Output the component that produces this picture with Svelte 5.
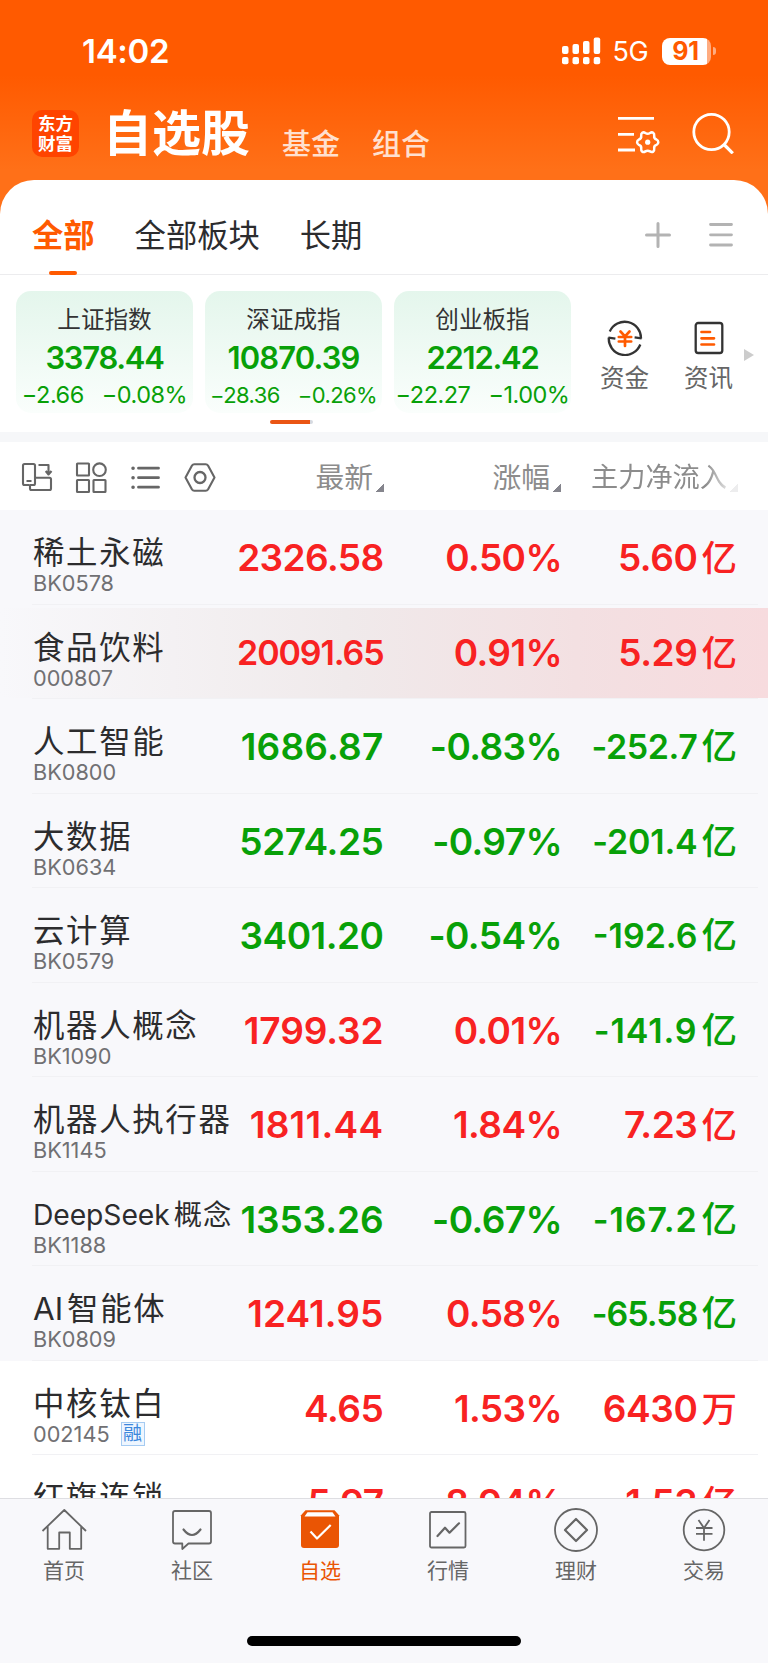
<script lang="ts">
    type Tone = 'up' | 'down';

    interface Row {
        latin?: string;
        name: string;
        code: string;
        price: string;
        priceGap: number;
        percent: string;
        flow: string;
        flowGap?: number;
        unit: string;
        tone: Tone;
        flowTone: Tone;
        stock?: boolean;
        flash?: boolean;
        margin?: boolean;
    }

    const indices = [
        { name: '上证指数', value: '3378.44', change: '−2.66', percent: '−0.08%', fit: '' },
        { name: '深证成指', value: '10870.39', change: '−28.36', percent: '−0.26%', fit: 'tight' },
        { name: '创业板指', value: '2212.42', change: '−22.27', percent: '−1.00%', fit: '' },
    ];

    const rows: Row[] = [
        { name: '稀土永磁', code: 'BK0578', price: '2326.58', priceGap: -0.6, percent: '0.50%', flow: '5.60', unit: '亿', tone: 'up', flowTone: 'up' },
        { name: '食品饮料', code: '000807', price: '20091.65', priceGap: -1.1, percent: '0.91%', flow: '5.29', unit: '亿', tone: 'up', flowTone: 'up', flash: true },
        { name: '人工智能', code: 'BK0800', price: '1686.87', priceGap: 0.2, percent: '-0.83%', flow: '-252.7', unit: '亿', tone: 'down', flowTone: 'down' },
        { name: '大数据', code: 'BK0634', price: '5274.25', priceGap: -0.4, percent: '-0.97%', flow: '-201.4', flowGap: -0.2, unit: '亿', tone: 'down', flowTone: 'down' },
        { name: '云计算', code: 'BK0579', price: '3401.20', priceGap: -0.5, percent: '-0.54%', flow: '-192.6', flowGap: 0, unit: '亿', tone: 'down', flowTone: 'down' },
        { name: '机器人概念', code: 'BK1090', price: '1799.32', priceGap: -0.1, percent: '0.01%', flow: '-141.9', flowGap: 0.9, unit: '亿', tone: 'up', flowTone: 'down' },
        { name: '机器人执行器', code: 'BK1145', price: '1811.44', priceGap: 0.3, percent: '1.84%', flow: '7.23', unit: '亿', tone: 'up', flowTone: 'up' },
        { latin: 'DeepSeek', name: '概念', code: 'BK1188', price: '1353.26', priceGap: -0.1, percent: '-0.67%', flow: '-167.2', flowGap: 0.9, unit: '亿', tone: 'down', flowTone: 'down' },
        { latin: 'AI', name: '智能体', code: 'BK0809', price: '1241.95', priceGap: 0.1, percent: '0.58%', flow: '-65.58', flowGap: -1, unit: '亿', tone: 'up', flowTone: 'down' },
        { name: '中核钛白', code: '002145', price: '4.65', priceGap: -0.4, percent: '1.53%', flow: '6430', unit: '万', tone: 'up', flowTone: 'up', stock: true, margin: true },
        { name: '红旗连锁', code: '002697', price: '5.97', priceGap: -0.5, percent: '8.94%', flow: '1.53', unit: '亿', tone: 'up', flowTone: 'up', stock: true },
    ];

    const tabs = ['首页', '社区', '自选', '行情', '理财', '交易'];
    let activeTab = $state('自选');
</script>

<div class="phone">
    <header class="hero">
        <div class="status">
            <span class="status__time">14:02</span>
            <svg width="39" height="28" viewBox="0 0 39 28" fill="#fff">
                <rect x="0" y="9" width="6.5" height="8" rx="2" />
                <rect x="10.5" y="7" width="6.5" height="10" rx="2" />
                <rect x="21" y="4" width="6.5" height="13" rx="2" />
                <rect x="31.7" y="0.5" width="6.5" height="16.5" rx="2" />
                <rect x="0" y="20" width="6.5" height="7.3" rx="2" />
                <rect x="10.5" y="20" width="6.5" height="7.3" rx="2" />
                <rect x="21" y="20" width="6.5" height="7.3" rx="2" />
                <rect x="31.7" y="20" width="6.5" height="7.3" rx="2" />
            </svg>
            <span class="status__net">5G</span>
            <div class="battery">91</div>
            <i class="battery__cap"></i>
        </div>

        <div class="title-bar">
            <div class="logo"><span>东方</span><span>财富</span></div>
            <h1>自选股</h1>
            <span class="title-bar__link">基金</span>
            <span class="title-bar__link">组合</span>
            <svg class="title-bar__filter" width="42" height="42" viewBox="0 0 42 42" fill="none" stroke="#fff" stroke-width="2.8">
                <path d="M0 3.3h36M0 19.3h16M0 35h17" />
                <path
                    d="M8.8 2.7Q6.1 3.6 6.5 6.300C6.900 9.200 4.700 10.700 2.300 9.200Q0 7.700-2.300 9.200C-4.700 10.700-6.900 9.200-6.500 6.300Q-6.100 3.600-8.800 2.700C-11.200 1.500-11.200-1.500-8.800-2.700Q-6.100-3.600-6.500-6.300C-6.900-9.200-4.700-10.700-2.300-9.200Q0-7.700 2.300-9.200C4.700-10.700 6.900-9.200 6.500-6.300Q6.100-3.600 8.800-2.700C11.200-1.500 11.200 1.500 8.800 2.700z"
                    transform="translate(29.7 27.2)"
                    stroke-width="2.5"
                />
                <circle cx="29.7" cy="27.2" r="2.6" fill="#fff" stroke="none" />
            </svg>
            <svg class="title-bar__search" width="42" height="42" viewBox="0 0 42 42" fill="none" stroke="#fff" stroke-width="2.8">
                <circle cx="19.5" cy="20" r="17.7" />
                <path d="M31.5 32l9.3 9.3" stroke-width="3.2" />
            </svg>
        </div>
    </header>

    <main>
        <nav class="groups">
            <button class="groups__item active">全部</button>
            <button class="groups__item">全部板块</button>
            <button class="groups__item">长期</button>
            <svg class="groups__add" width="26" height="26" viewBox="0 0 26 26" stroke="#b3b3b3" stroke-width="3" stroke-linecap="round">
                <path d="M1.5 13h23M13 1.5v23" />
            </svg>
            <svg class="groups__menu" width="24" height="26" viewBox="0 0 24 26" stroke="#b3b3b3" stroke-width="2.8" stroke-linecap="round">
                <path d="M1.5 2.5h21M1.5 12.8h21M1.5 23h21" />
            </svg>
        </nav>

        <section class="market">
            {#each indices as item}
                <div class="index {item.fit}">
                    <div class="index__name">{item.name}</div>
                    <div class="index__value">{item.value}</div>
                    <div class="index__change"><span>{item.change}</span><span>{item.percent}</span></div>
                </div>
            {/each}
            <div class="shortcut shortcut--fund">
                <svg width="36" height="36" viewBox="0 0 36 36" fill="none" stroke="#333" stroke-width="2.3">
                    <path d="M2.8 11.5A16.3 16.3 0 0 1 34 18.5M34.6 18.3l-7-.9M33.3 24.5A16.3 16.3 0 0 1 1.8 17.5M1.4 17.7l7 .9" />
                    <path d="M13.5 11.5l4.5 4.8 4.5-4.8M11.8 17h12.4M11.8 21.5h12.4M18 16v10" stroke="#ff5a00" stroke-width="2.7" stroke-linecap="round" />
                </svg>
                <span>资金</span>
            </div>
            <div class="shortcut">
                <svg width="30" height="36" viewBox="0 0 30 36" fill="none" stroke="#333" stroke-width="2.3">
                    <rect x="1.7" y="3" width="26.6" height="30" rx="2.5" />
                    <path d="M7.5 12h8.5M7.5 18.3h12.5M7.5 24.5h12.5" stroke="#ff5a00" stroke-width="2.7" stroke-linecap="round" />
                </svg>
                <span>资讯</span>
            </div>
            <i class="market__more"></i>
        </section>
        <div class="pager"><i></i></div>

        <div class="columns">
            <svg width="200" height="32" viewBox="0 0 200 32" fill="none" stroke="#666" stroke-width="2.1" stroke-linejoin="round">
                <path d="M9 23H4.5Q3 23 3 21.5v-18Q3 2 4.5 2h9Q15 2 15 3.5V15.7M6.5 19h5M18.5 3h10v9M25.7 9l2.8 3.5L31.5 9" />
                <path d="M15 15.7h14.5q1.500 0 1.500 1.500v9.300q0 1.500-1.500 1.500H11.500Q10 28 10 26.500V23h3.500q1.500 0 1.500-1.500z" />
                <rect x="57" y="1.5" width="12" height="12" rx=".5" />
                <circle cx="79.5" cy="7.7" r="6.3" />
                <rect x="57" y="18" width="12" height="12" rx=".5" />
                <rect x="73.5" y="18" width="12" height="12" rx=".5" />
                <path d="M118.5 6.2h20M118.5 15.7h20M118.5 25.2h20" stroke-width="2.8" stroke-linecap="round" />
                <path d="M113 6.2h.1M113 15.7h.1M113 25.2h.1" stroke-width="3.5" stroke-linecap="round" />
                <path d="M165.5 15.5l6.5-12q.8-1.3 2.3-1.3h11.4q1.5 0 2.3 1.3l6.5 12-6.5 12q-.8 1.3-2.3 1.3h-11.4q-1.5 0-2.3-1.3z" />
                <circle cx="180" cy="15.5" r="5.5" stroke-width="2.3" />
            </svg>
            <span class="columns__cell columns__cell--price">最新<i></i></span>
            <span class="columns__cell columns__cell--percent">涨幅<i></i></span>
            <span class="columns__cell columns__cell--flow">主力净流入<i></i></span>
        </div>

        <ul class="list">
            {#each rows as row}
                <li class="row" class:stock={row.stock} class:flash={row.flash}>
                    <div class="row__title">
                        <div class="row__name" class:narrow={row.latin === 'DeepSeek'}>
                            {#if row.latin}<span>{row.latin}</span>{/if}{row.name}
                        </div>
                        <div class="row__code">
                            {row.code}
                            {#if row.margin}<em>融</em>{/if}
                        </div>
                    </div>
                    <div class="row__price {row.tone}" class:long={row.price.length > 7} style:letter-spacing="{row.priceGap}px">{row.price}</div>
                    <div class="row__percent {row.tone}">{row.percent}</div>
                    <div class="row__flow {row.flowTone}" class:long={row.flow.length > 5} style:letter-spacing="{row.flowGap ?? -0.4}px">{row.flow}<b>{row.unit}</b></div>
                </li>
            {/each}
        </ul>
    </main>

    <footer>
        <nav class="tabbar">
            {#each tabs as tab}
                <button class="tabbar__item" class:active={tab === activeTab} onclick={() => (activeTab = tab)}>
                    <svg width="46" height="46" viewBox="0 0 46 46" fill="none" stroke="#666" stroke-width="1.8" stroke-linejoin="round">
                        {#if tab === '首页'}
                            <path d="M1.5 24L23.3 3l21.700 21M6.700 19.500v22.300h11.500V25.500h10.600v16.300h11.400V19.500" />
                        {:else if tab === '社区'}
                            <path d="M6 4h34q2 0 2 2v28.500q0 2-2 2H19.500L13.300 42v-5.500H6q-2 0-2-2V6q0-2 2-2z" />
                            <path d="M14.500 22.500q8.500 11 17 0" stroke-width="2.2" stroke-linecap="round" />
                        {:else if tab === '自选'}
                            <path d="M8.500 3.300h29L42 8.300V38q0 3-3 3H7q-3 0-3-3V8.300z" fill="#ea5504" stroke="none" />
                            <path d="M10.500 5.300h25l3 4.200h-31z" fill="#fff" stroke="none" />
                            <path d="M13.500 24.500l6.500 7 13.700-13.500" stroke="#fff" stroke-width="2.2" />
                        {:else if tab === '行情'}
                            <rect x="5" y="5" width="35.5" height="35.5" rx="1.5" />
                            <path d="M12.500 29l7.500-8.300 4.500 5 9.500-9.400" stroke-width="2.2" stroke-linecap="round" />
                        {:else if tab === '理财'}
                            <circle cx="23" cy="23" r="21" />
                            <path d="M23 12l11 11-11 11-11-11z" stroke-width="2.2" />
                        {:else}
                            <circle cx="23" cy="23" r="20.3" />
                            <path d="M17.500 13l5.500 8 5.500-8M15 21h16.500M15 26.800h16.500M23 20v13.800" />
                        {/if}
                    </svg>
                    <span>{tab}</span>
                </button>
            {/each}
        </nav>
        <div class="home-indicator"></div>
    </footer>
</div>

<style>
    :global(body) {
        margin: 0;
    }

    * {
        box-sizing: border-box;
    }

    .phone {
        display: flex;
        flex-direction: column;
        width: 768px;
        height: 1663px;
        overflow: hidden;
        background: linear-gradient(#ff5a00 0, #ff5a00 75px, #ff7018 170px, #ff7018 230px, #fff 230px);
        color: #2c2c2e;
        font-family: Inter, 'Noto Sans CJK SC', sans-serif;
    }

    button {
        padding: 0;
        border: none;
        background: none;
        color: inherit;
        font-family: inherit;
    }

    svg {
        flex: none;
    }

    .hero {
        flex: none;
        height: 179.5px;
        color: #fff;
    }

    .status {
        display: flex;
        align-items: center;
        height: 102px;
        padding-left: 82px;
    }

    .status__time {
        width: 479.5px;
        font-size: 33px;
        font-weight: 600;
        letter-spacing: -0.3px;
    }

    .status__net {
        width: 49px;
        padding: 1px 0 0 12px;
        font-size: 27px;
        letter-spacing: -0.4px;
    }

    .battery {
        width: 49px;
        height: 27px;
        margin-left: 12.5px;
        padding-right: 2px;
        border-radius: 8px;
        background: linear-gradient(90deg, #fff 45px, #ffac80 45px);
        color: #ff5a00;
        font-size: 25px;
        font-weight: 700;
        line-height: 27px;
        text-align: center;
        letter-spacing: -0.3px;
    }

    .battery__cap {
        width: 3px;
        height: 8px;
        margin-left: 2px;
        border-radius: 0 4px 4px 0;
        background: #ffac80;
    }

    .title-bar {
        display: flex;
        align-items: flex-start;
        height: 77px;
        padding-left: 32px;
    }

    .logo {
        display: flex;
        flex-direction: column;
        align-items: center;
        width: 47px;
        height: 47px;
        margin-top: 8px;
        padding-top: 4px;
        border-radius: 10px;
        background: #ff4400;
        font-size: 17.5px;
        font-weight: 700;
        line-height: 20px;
    }

    h1 {
        width: 147px;
        margin: 6px 0 0 24px;
        font-size: 49px;
        font-weight: 700;
        line-height: 52px;
        white-space: nowrap;
    }

    .title-bar__link {
        width: 58px;
        margin: 25px 0 0 32px;
        color: #ffe0cf;
        font-size: 29px;
        font-weight: 500;
        line-height: 36px;
        white-space: nowrap;
    }

    .title-bar__filter {
        margin: 13px 0 0 188px;
    }

    .title-bar__search {
        margin: 10px 0 0 32px;
    }

    main {
        flex: 1;
        min-height: 0;
        overflow: hidden;
        border-radius: 34px 34px 0 0;
        background: #fff;
    }

    .groups {
        display: flex;
        align-items: center;
        height: 95.5px;
        padding: 16px 0 0 32px;
        border-bottom: 1px solid #ececee;
    }

    .groups__item {
        position: relative;
        height: 79px;
        margin-right: 40px;
        padding-bottom: 3px;
        font-size: 31.3px;
        white-space: nowrap;
    }

    .groups__item.active {
        color: #ff5a00;
        font-weight: 700;
    }

    .groups__item.active::after {
        position: absolute;
        bottom: -1px;
        left: 17px;
        width: 28px;
        height: 4px;
        border-radius: 2px;
        background: #ff5a00;
        content: '';
    }

    .groups__add {
        margin-left: auto;
    }

    .groups__menu {
        margin: 0 35px 0 38px;
    }

    .market {
        display: flex;
        gap: 12px;
        height: 138px;
        padding: 16px 0 0 16px;
    }

    .index {
        width: 177px;
        height: 122px;
        padding-top: 11px;
        border-radius: 15px;
        background: linear-gradient(#e4f6ec, #fafefc);
        text-align: center;
        white-space: nowrap;
    }

    .index__name {
        color: #333;
        font-size: 23.6px;
        line-height: 36px;
    }

    .index__value {
        color: #08a008;
        font-size: 31px;
        font-weight: 600;
        line-height: 39px;
        letter-spacing: -1.3px;
    }

    .index__change {
        display: flex;
        gap: 18px;
        justify-content: center;
        color: #08a008;
        font-size: 23.5px;
        line-height: 36px;
        letter-spacing: -0.5px;
    }

    .tight .index__value {
        letter-spacing: -0.9px;
    }

    .tight .index__change {
        font-size: 22px;
        letter-spacing: -0.6px;
    }

    .shortcut {
        display: flex;
        flex-direction: column;
        flex: none;
        align-items: center;
        width: 49px;
        margin: 29px 0 0 23px;
        color: #666;
        font-size: 24.5px;
        line-height: 45px;
        white-space: nowrap;
    }

    .shortcut--fund {
        margin-left: 17px;
    }

    .market__more {
        height: 0;
        margin: 58px 0 0 -1px;
        border: solid transparent;
        border-width: 6px 0 6px 10px;
        border-left-color: #ccc;
    }

    .pager {
        height: 29px;
        padding: 7px 0 0 270px;
        border-bottom: 10px solid #f6f7f9;
    }

    .pager i {
        display: block;
        width: 43px;
        height: 4px;
        border-radius: 2px;
        background: linear-gradient(90deg, #ea5514 40px, #d5d9e0 40px);
    }

    .columns {
        display: flex;
        align-items: center;
        height: 68px;
        padding: 3px 0 0 20px;
        color: #8c8c8c;
    }

    .columns__cell {
        display: flex;
        gap: 3px;
        align-items: flex-end;
        justify-content: flex-end;
        font-size: 28.8px;
        line-height: 42px;
        white-space: nowrap;
    }

    .columns__cell i {
        width: 8px;
        height: 8px;
        margin-bottom: 7px;
        background: linear-gradient(135deg, transparent 50%, #85858d 50%);
    }

    .columns__cell--price {
        width: 164px;
    }

    .columns__cell--percent {
        width: 177px;
    }

    .columns__cell--flow {
        width: 177px;
        font-size: 27.2px;
        mask-image: linear-gradient(90deg, #000 145px, rgba(0, 0, 0, 0.15) 170px);
    }

    .list {
        margin: 0;
        padding: 0;
        list-style: none;
    }

    .row {
        display: flex;
        position: relative;
        height: 94.5px;
        padding-left: 33px;
        background: #f8f8fb;
        white-space: nowrap;
    }

    .row::after {
        position: absolute;
        right: 10px;
        bottom: 0;
        left: 32px;
        height: 1px;
        background: #f1f1f4;
        content: '';
    }

    .row.stock {
        background: #fff;
    }

    .row.flash {
        background: linear-gradient(90deg, #f8f8fb, #f0eaeb 45%, #f3e0e2 75%, #f7dbde) 0 3px / 100% 90px no-repeat #f8f8fb;
    }

    .row__title {
        width: 180px;
        padding-top: 22px;
    }

    .row__name {
        height: 40px;
        font-size: 31.4px;
        line-height: 43px;
        letter-spacing: 1.7px;
    }

    .row__name span {
        margin-right: 4px;
        letter-spacing: 0;
    }

    .row__name.narrow {
        font-size: 28.3px;
        letter-spacing: 1px;
    }

    .row__name.narrow span {
        letter-spacing: -0.1px;
    }

    .row__code {
        display: flex;
        gap: 11px;
        align-items: center;
        height: 22px;
        color: #707073;
        font-size: 21.7px;
        line-height: 22px;
    }

    .row__code em {
        width: 24px;
        height: 24px;
        border: 1.5px solid #a5cbf2;
        background: #eef6ff;
        color: #3c87dc;
        font-size: 19px;
        font-style: normal;
        line-height: 22px;
        text-align: center;
    }

    .row__price,
    .row__percent,
    .row__flow {
        font-size: 37px;
        font-weight: 600;
        line-height: 96px;
        text-align: right;
    }

    .row__price {
        width: 170.5px;
    }

    .row__percent {
        width: 178.5px;
        letter-spacing: -0.6px;
    }

    .row__flow {
        width: 175px;
    }

    .row__price.long,
    .row__flow.long {
        font-size: 34px;
    }

    .row__flow b {
        margin-left: 4px;
        font-size: 35.5px;
        font-weight: 500;
        letter-spacing: 0;
    }

    .up {
        color: #f82222;
    }

    .down {
        color: #08a008;
    }

    footer {
        flex: none;
        height: 165px;
        border-top: 1px solid #dedee2;
        background: #f8f8fb;
    }

    .tabbar {
        display: flex;
        height: 137px;
    }

    .tabbar__item {
        display: flex;
        flex: 1;
        flex-direction: column;
        align-items: center;
        padding-top: 8px;
        color: #666;
        font-size: 21px;
        line-height: 36px;
    }

    .tabbar__item.active {
        color: #ea5504;
    }

    .home-indicator {
        width: 274px;
        height: 10px;
        margin: 0 auto;
        border-radius: 5px;
        background: #000;
    }
</style>
